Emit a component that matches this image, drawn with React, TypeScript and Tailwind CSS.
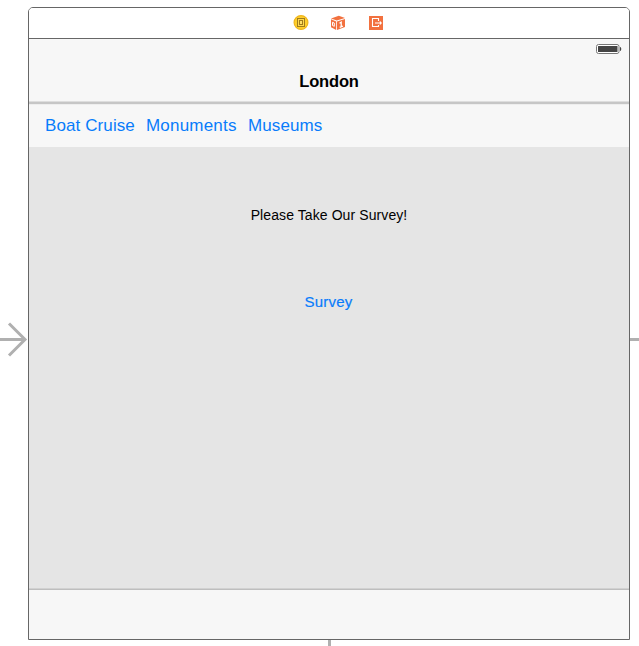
function CoinIcon() {
  return (
    <svg width="16" height="16" viewBox="0 0 16 16" aria-hidden="true">
      <circle cx="8" cy="7.5" r="6.9" fill="#ffcf2b" stroke="#efb51d" strokeWidth="1.2" />
      <rect x="4.5" y="3.5" width="7" height="8" fill="#ffd84d" stroke="#a07c1c" />
      <rect x="6.5" y="5.5" width="3" height="4" fill="#ffdf66" stroke="#a07c1c" />
    </svg>
  );
}

function CubeIcon() {
  return (
    <svg width="16" height="16" viewBox="0 0 16 16" aria-hidden="true">
      <path d="M1 3.5 8.8 .8 15 3 6.8 5.6Z" fill="#f2713f" />
      <path d="M1 4.3 6.2 6.4V15L1 12.3Z" fill="#f2713f" />
      <path d="M7 6.4 15 3.9V12.1L7 15Z" fill="#f2713f" />
      <path d="M2.5 7.3 4.3 8.1V11.3L2.5 10.5Z" fill="none" stroke="#fff" strokeWidth="1" />
      <path d="M9.5 8.2 11.2 7.2V11.8M9.7 12.3 12.9 11.1" fill="none" stroke="#fff" strokeWidth="1.3" />
    </svg>
  );
}

function ExitIcon() {
  return (
    <svg width="16" height="16" viewBox="0 0 16 16" aria-hidden="true">
      <rect x="1" y="1" width="14" height="14" fill="#f2713f" />
      <path d="M10.5 6V3.5H4.5V11.5H10.5V10M7 8H13" fill="none" stroke="#fff" strokeWidth="1.1" />
      <path d="M11.8 5.8 14 8 11.8 10.2Z" fill="#fff" />
    </svg>
  );
}

function Battery() {
  return (
    <svg width="26" height="10" viewBox="0 0 26 10" aria-hidden="true">
      <rect x=".5" y=".5" width="22.5" height="9" rx="2" fill="#fff" stroke="#777" />
      <rect x="2" y="2" width="19.5" height="6" rx=".5" fill="#454545" />
      <path d="M24 3Q25.3 3.2 25.3 5T24 7Z" fill="#454545" />
    </svg>
  );
}

export default function App() {
  return (
    <div className="flex h-[646px] w-[639px] overflow-hidden bg-white font-['Liberation_Sans',Arial,sans-serif]">
      <div className="w-7 shrink-0 pt-[321px]">
        <svg width="28" height="37" viewBox="0 0 28 37" fill="none" stroke="#b0b0b0" strokeWidth="3" aria-hidden="true">
          <path d="M0 18.5H25M9 2.5 25 18.5 9 34.5" />
        </svg>
      </div>
      <div className="flex w-[602px] shrink-0 flex-col items-center pt-[7px]">
        <main className="flex h-[633px] w-full shrink-0 flex-col overflow-hidden rounded-t-[5px] border border-[#666] bg-[#f7f7f7]">
          <header className="flex h-[31px] shrink-0 border-b border-[#666] bg-white pl-[264px] pt-[7px]">
            <CoinIcon />
            <div className="ml-[21px]"><CubeIcon /></div>
            <div className="ml-[22px]"><ExitIcon /></div>
          </header>
          <div className="flex h-[62px] shrink-0 flex-col">
            <div className="flex h-5 justify-end pr-[7px] pt-[5px]"><Battery /></div>
            <h1 className="mt-3 text-center text-[16.5px] leading-5 font-bold tracking-[-0.15px] text-black">London</h1>
          </div>
          <div className="h-px shrink-0 bg-[#dedede]" />
          <div className="h-0.5 shrink-0 bg-[#c6c6c6]" />
          <div className="h-px shrink-0 bg-[#eee]" />
          <nav className="flex h-[42px] shrink-0 gap-[11px] pl-4 pt-[11px] text-[17px] leading-5 tracking-[0.1px] text-[#087cfb]">
            <button className="h-5 w-[90px] text-left whitespace-nowrap">Boat Cruise</button>
            <button className="h-5 w-[91px] text-left tracking-[0.2px] whitespace-nowrap">Monuments</button>
            <button className="h-5 whitespace-nowrap">Museums</button>
          </nav>
          <section className="flex h-[441px] shrink-0 flex-col items-center bg-[#e5e5e5] pt-[58px]">
            <p className="text-[14px] leading-5 tracking-[0.09px] text-black">Please Take Our Survey!</p>
            <button className="mt-[67px] mr-px text-[15px] leading-5 tracking-[0.18px] text-[#087cfb] [-webkit-text-stroke:0.2px_#087cfb]">Survey</button>
          </section>
          <div className="h-px shrink-0 bg-[#d1d1d1]" />
          <div className="h-px shrink-0 bg-[#bebebe]" />
        </main>
        <div className="h-1.5 w-[3px] bg-[#b0b0b0]" />
      </div>
      <div className="w-[9px] shrink-0 pt-[338px]"><div className="h-[3px] bg-[#b0b0b0]" /></div>
    </div>
  );
}
